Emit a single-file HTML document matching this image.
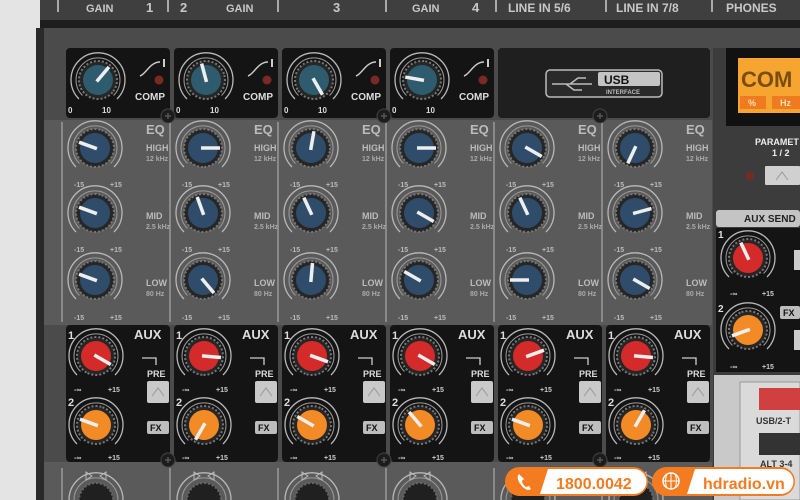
<!DOCTYPE html>
<html><head><meta charset="utf-8"><style>
html,body{margin:0;padding:0;width:800px;height:500px;overflow:hidden;background:#4a4a4a}
svg{display:block}
text{font-family:"Liberation Sans",sans-serif;font-weight:bold}
</style></head><body>
<svg width="800" height="500" viewBox="0 0 800 500" xmlns="http://www.w3.org/2000/svg">
<defs>
<symbol id="ring" overflow="visible"><path d="M-19,19 A27,27 0 1 1 19,19" fill="none" stroke="#b8b8b8" stroke-width="1.3"/><path d="M-15.5,15.5 A22,22 0 1 1 15.5,15.5" fill="none" stroke="#999" stroke-width="1"/></symbol>
<symbol id="kb" overflow="visible"><circle r="19" fill="#262626" stroke="#777" stroke-width="2" stroke-dasharray="2 2"/><circle r="15" fill="#2f4d6a"/><path d="M0,2 L0,-17" stroke="#eee" stroke-width="3.5"/></symbol>
<symbol id="kr" overflow="visible"><circle r="19" fill="#262626" stroke="#777" stroke-width="2" stroke-dasharray="2 2"/><circle r="15" fill="#d42a2a"/><path d="M0,2 L0,-17" stroke="#eee" stroke-width="3.5"/></symbol>
<symbol id="ko" overflow="visible"><circle r="19" fill="#262626" stroke="#777" stroke-width="2" stroke-dasharray="2 2"/><circle r="15" fill="#f28a25"/><path d="M0,2 L0,-17" stroke="#eee" stroke-width="3.5"/></symbol>
<symbol id="kt" overflow="visible"><circle r="19" fill="#262626" stroke="#777" stroke-width="2" stroke-dasharray="2 2"/><circle r="15" fill="#2e5c6e"/><path d="M0,2 L0,-17" stroke="#eee" stroke-width="3.5"/></symbol>
<symbol id="screw" overflow="visible"><circle r="7" fill="#1c1c1c" stroke="#444"/><path d="M-3,0H3M0,-3V3" stroke="#555" stroke-width="1.5"/></symbol>
<symbol id="col" overflow="visible">
<rect x="0" y="48" width="104" height="70" rx="4" fill="#141414"/>
<use href="#ring" x="32" y="80"/>
<path d="M74,76 C80,74 84,62 94,62" fill="none" stroke="#ccc" stroke-width="1.5"/>
<rect x="97" y="59" width="2" height="8" fill="#ccc"/>
<circle cx="93" cy="80" r="4.5" fill="#7a2a22"/>
<path d="M-4,122 V322" stroke="#8a8a8a" stroke-width="2"/>
<rect x="0" y="325" width="104" height="137" rx="4" fill="#141414"/>
<path d="M76,358 H90 V365" fill="none" stroke="#ccc" stroke-width="1.3"/>
<rect x="81" y="381" width="22" height="22" rx="2" fill="#c9c9c9"/>
<path d="M86,396 L92,388 L98,396" fill="none" stroke="#999"/>
<rect x="81" y="421" width="22" height="13" rx="2" fill="#bdbdbd"/>
<use href="#ring" x="29" y="148"/><use href="#ring" x="29" y="213"/><use href="#ring" x="29" y="280"/>
<use href="#ring" x="30" y="356"/><use href="#ring" x="30" y="425"/>
<path d="M-4,468 V500" stroke="#8a8a8a" stroke-width="2"/>
<use href="#ring" x="30" y="500"/>
<circle cx="30" cy="500" r="17" fill="#202020" stroke="#666" stroke-width="2" stroke-dasharray="2 2"/>
<path d="M20,472 L26,476 L20,480Z M40,472 L34,476 L40,480Z" fill="none" stroke="#bbb"/>
</symbol>
</defs>
<rect width="800" height="500" fill="#4b4b4b"/>
<rect x="0" y="0" width="800" height="22" fill="#3f3f3f"/>
<rect x="0" y="20" width="800" height="8" fill="#1e1e1e"/>
<rect x="0" y="0" width="40" height="500" fill="#e4e4e4"/>
<rect x="36" y="28" width="8" height="472" fill="#2a2a2a"/>
<rect x="44" y="120" width="668" height="205" fill="#5a5a5a"/>
<rect x="44" y="462" width="668" height="38" fill="#5a5a5a"/>
<g stroke="#aaa" stroke-width="2"><path d="M58,0V12M168,0V12M278,0V12M386,0V12M496,0V12M606,0V12M712,0V12"/></g>
<g fill="#c8c8c8" font-size="11">
<text x="86" y="12">GAIN</text><text x="146" y="12" font-size="13">1</text>
<text x="180" y="12" font-size="13">2</text><text x="226" y="12">GAIN</text><text x="333" y="12" font-size="13">3</text>
<text x="412" y="12">GAIN</text><text x="472" y="12" font-size="13">4</text>
<text x="508" y="12" font-size="12">LINE IN 5/6</text><text x="616" y="12" font-size="12">LINE IN 7/8</text><text x="726" y="12" font-size="12">PHONES</text>
</g>
<use href="#col" x="66"/><use href="#col" x="174"/><use href="#col" x="282"/><use href="#col" x="390"/>
<use href="#col" x="498"/><use href="#col" x="606"/>
<rect x="498" y="48" width="212" height="70" rx="4" fill="#1f1f1f"/>
<rect x="546" y="70" width="116" height="27" rx="4" fill="#2a2a2a" stroke="#bbb" stroke-width="1.5"/>
<rect x="598" y="72" width="62" height="14" rx="2" fill="#c4c4c4"/>
<path d="M552,84 H592 M570,84 L578,78 H586 M566,84 L574,90 H582" stroke="#bbb" stroke-width="1.5" fill="none"/>
<text x="604" y="84" font-size="12" fill="#111">USB</text>
<text x="606" y="94" font-size="6" fill="#bbb">INTERFACE</text>
<use href="#kt" transform="translate(98,80) rotate(40)"/><use href="#kt" transform="translate(206,80) rotate(-15)"/><use href="#kt" transform="translate(314,80) rotate(150)"/><use href="#kt" transform="translate(422,80) rotate(-80)"/>
<g>
<use href="#kb" transform="translate(95,148) rotate(-70)"/><use href="#kb" transform="translate(203,148) rotate(90)"/><use href="#kb" transform="translate(311,148) rotate(10)"/><use href="#kb" transform="translate(419,148) rotate(90)"/><use href="#kb" transform="translate(527,148) rotate(120)"/><use href="#kb" transform="translate(635,148) rotate(-155)"/>
<use href="#kb" transform="translate(95,213) rotate(-70)"/><use href="#kb" transform="translate(203,213) rotate(-20)"/><use href="#kb" transform="translate(311,213) rotate(-25)"/><use href="#kb" transform="translate(419,213) rotate(120)"/><use href="#kb" transform="translate(527,213) rotate(-25)"/><use href="#kb" transform="translate(635,213) rotate(75)"/>
<use href="#kb" transform="translate(95,280) rotate(-70)"/><use href="#kb" transform="translate(203,280) rotate(140)"/><use href="#kb" transform="translate(311,280) rotate(5)"/><use href="#kb" transform="translate(419,280) rotate(-60)"/><use href="#kb" transform="translate(527,280) rotate(-90)"/><use href="#kb" transform="translate(635,280) rotate(120)"/>
<use href="#kr" transform="translate(96,356) rotate(120)"/><use href="#kr" transform="translate(204,356) rotate(95)"/><use href="#kr" transform="translate(312,356) rotate(110)"/><use href="#kr" transform="translate(420,356) rotate(120)"/><use href="#kr" transform="translate(528,356) rotate(70)"/><use href="#kr" transform="translate(636,356) rotate(95)"/>
<use href="#ko" transform="translate(96,425) rotate(-70)"/><use href="#ko" transform="translate(204,425) rotate(-150)"/><use href="#ko" transform="translate(312,425) rotate(-60)"/><use href="#ko" transform="translate(420,425) rotate(-40)"/><use href="#ko" transform="translate(528,425) rotate(-70)"/><use href="#ko" transform="translate(636,425) rotate(30)"/>
</g>
<use href="#screw" x="168" y="116"/><use href="#screw" x="384" y="116"/><use href="#screw" x="600" y="116"/><use href="#screw" x="168" y="460"/><use href="#screw" x="384" y="460"/><use href="#screw" x="600" y="460"/>
<g font-size="10" fill="#ddd">
<text x="68" y="113" font-size="8">0</text><text x="102" y="113" font-size="8">10</text><text x="135" y="100">COMP</text>
<text x="176" y="113" font-size="8">0</text><text x="210" y="113" font-size="8">10</text><text x="243" y="100">COMP</text>
<text x="284" y="113" font-size="8">0</text><text x="318" y="113" font-size="8">10</text><text x="351" y="100">COMP</text>
<text x="392" y="113" font-size="8">0</text><text x="426" y="113" font-size="8">10</text><text x="459" y="100">COMP</text>
</g>
<g fill="#bbb" font-size="13">
<text x="146" y="134">EQ</text><text x="254" y="134">EQ</text><text x="362" y="134">EQ</text><text x="470" y="134">EQ</text><text x="578" y="134">EQ</text><text x="686" y="134">EQ</text>
</g>
<g fill="#bbb" font-size="9">
<text x="146" y="151">HIGH</text><text x="254" y="151">HIGH</text><text x="362" y="151">HIGH</text><text x="470" y="151">HIGH</text><text x="578" y="151">HIGH</text><text x="686" y="151">HIGH</text>
<text x="146" y="219">MID</text><text x="254" y="219">MID</text><text x="362" y="219">MID</text><text x="470" y="219">MID</text><text x="578" y="219">MID</text><text x="686" y="219">MID</text>
<text x="146" y="286">LOW</text><text x="254" y="286">LOW</text><text x="362" y="286">LOW</text><text x="470" y="286">LOW</text><text x="578" y="286">LOW</text><text x="686" y="286">LOW</text>
</g>
<g fill="#aaa" font-size="7">
<text x="146" y="161">12 kHz</text><text x="254" y="161">12 kHz</text><text x="362" y="161">12 kHz</text><text x="470" y="161">12 kHz</text><text x="578" y="161">12 kHz</text><text x="686" y="161">12 kHz</text>
<text x="146" y="229">2.5 kHz</text><text x="254" y="229">2.5 kHz</text><text x="362" y="229">2.5 kHz</text><text x="470" y="229">2.5 kHz</text><text x="578" y="229">2.5 kHz</text><text x="686" y="229">2.5 kHz</text>
<text x="146" y="296">80 Hz</text><text x="254" y="296">80 Hz</text><text x="362" y="296">80 Hz</text><text x="470" y="296">80 Hz</text><text x="578" y="296">80 Hz</text><text x="686" y="296">80 Hz</text>
</g>
<g fill="#bbb" font-size="7">
<text x="74" y="187">-15</text><text x="110" y="187">+15</text><text x="182" y="187">-15</text><text x="218" y="187">+15</text><text x="290" y="187">-15</text><text x="326" y="187">+15</text><text x="398" y="187">-15</text><text x="434" y="187">+15</text><text x="506" y="187">-15</text><text x="542" y="187">+15</text><text x="614" y="187">-15</text><text x="650" y="187">+15</text>
<text x="74" y="252">-15</text><text x="110" y="252">+15</text><text x="182" y="252">-15</text><text x="218" y="252">+15</text><text x="290" y="252">-15</text><text x="326" y="252">+15</text><text x="398" y="252">-15</text><text x="434" y="252">+15</text><text x="506" y="252">-15</text><text x="542" y="252">+15</text><text x="614" y="252">-15</text><text x="650" y="252">+15</text>
<text x="74" y="320">-15</text><text x="110" y="320">+15</text><text x="182" y="320">-15</text><text x="218" y="320">+15</text><text x="290" y="320">-15</text><text x="326" y="320">+15</text><text x="398" y="320">-15</text><text x="434" y="320">+15</text><text x="506" y="320">-15</text><text x="542" y="320">+15</text><text x="614" y="320">-15</text><text x="650" y="320">+15</text>
</g>
<g fill="#ddd" font-size="13">
<text x="134" y="339">AUX</text><text x="242" y="339">AUX</text><text x="350" y="339">AUX</text><text x="458" y="339">AUX</text><text x="566" y="339">AUX</text><text x="674" y="339">AUX</text>
<text x="68" y="339" font-size="11">1</text><text x="176" y="339" font-size="11">1</text><text x="284" y="339" font-size="11">1</text><text x="392" y="339" font-size="11">1</text><text x="500" y="339" font-size="11">1</text><text x="608" y="339" font-size="11">1</text>
<text x="68" y="406" font-size="11">2</text><text x="176" y="406" font-size="11">2</text><text x="284" y="406" font-size="11">2</text><text x="392" y="406" font-size="11">2</text><text x="500" y="406" font-size="11">2</text><text x="608" y="406" font-size="11">2</text>
</g>
<g fill="#ddd" font-size="9">
<text x="147" y="377">PRE</text><text x="255" y="377">PRE</text><text x="363" y="377">PRE</text><text x="471" y="377">PRE</text><text x="579" y="377">PRE</text><text x="687" y="377">PRE</text>
</g>
<g fill="#111" font-size="9">
<text x="150" y="431">FX</text><text x="258" y="431">FX</text><text x="366" y="431">FX</text><text x="474" y="431">FX</text><text x="582" y="431">FX</text><text x="690" y="431">FX</text>
</g>
<g fill="#ccc" font-size="7">
<text x="74" y="392">-∞</text><text x="108" y="392">+15</text><text x="182" y="392">-∞</text><text x="216" y="392">+15</text><text x="290" y="392">-∞</text><text x="324" y="392">+15</text><text x="398" y="392">-∞</text><text x="432" y="392">+15</text><text x="506" y="392">-∞</text><text x="540" y="392">+15</text><text x="614" y="392">-∞</text><text x="648" y="392">+15</text>
<text x="74" y="460">-∞</text><text x="108" y="460">+15</text><text x="182" y="460">-∞</text><text x="216" y="460">+15</text><text x="290" y="460">-∞</text><text x="324" y="460">+15</text><text x="398" y="460">-∞</text><text x="432" y="460">+15</text><text x="506" y="460">-∞</text><text x="540" y="460">+15</text><text x="614" y="460">-∞</text><text x="648" y="460">+15</text>
</g>
<rect x="713" y="48" width="87" height="452" fill="#3c3c3c"/>
<rect x="726" y="48" width="74" height="78" fill="#111"/>
<rect x="738" y="58" width="62" height="55" fill="#f5a530"/>
<text x="741" y="87" font-size="22" fill="#7a4e10" font-family="Liberation Mono" font-weight="normal">COM</text>
<rect x="740" y="96" width="26" height="13" fill="#f07a20"/><rect x="772" y="96" width="28" height="13" fill="#f07a20"/>
<text x="748" y="106" font-size="9" fill="#fde0b0">%</text><text x="780" y="106" font-size="9" fill="#fde0b0">Hz</text>
<text x="755" y="145" font-size="9" fill="#eee">PARAMET</text>
<text x="772" y="156" font-size="9" fill="#eee">1 / 2</text>
<circle cx="750" cy="176" r="4" fill="#7a2a22"/>
<rect x="765" y="166" width="35" height="19" rx="1" fill="#d0d0d0"/>
<path d="M776,180 L782,172 L788,180" fill="none" stroke="#999"/>
<rect x="716" y="210" width="84" height="17" rx="3" fill="#c4c4c4"/>
<text x="744" y="222" font-size="10" fill="#222">AUX SEND</text>
<rect x="716" y="228" width="84" height="144" fill="#141414"/>
<use href="#ring" x="748" y="258"/><use href="#kr" transform="translate(748,258) rotate(-25)"/>
<use href="#ring" x="748" y="330"/><use href="#ko" transform="translate(748,330) rotate(-110)"/>
<text x="718" y="238" font-size="10" fill="#ddd">1</text><text x="718" y="312" font-size="10" fill="#ddd">2</text>
<text x="730" y="296" font-size="7" fill="#ccc">-∞</text><text x="762" y="296" font-size="7" fill="#ccc">+15</text>
<text x="730" y="369" font-size="7" fill="#ccc">-∞</text><text x="762" y="369" font-size="7" fill="#ccc">+15</text>
<rect x="780" y="306" width="20" height="13" rx="2" fill="#bdbdbd"/><text x="783" y="316" font-size="9" fill="#111">FX</text>
<rect x="794" y="250" width="6" height="20" fill="#ccc"/><rect x="794" y="330" width="6" height="20" fill="#ccc"/>
<rect x="714" y="375" width="86" height="125" fill="#c9c9c9"/>
<rect x="740" y="382" width="60" height="118" fill="#dadada" stroke="#999"/>
<rect x="759" y="388" width="41" height="22" fill="#d04040"/>
<text x="756" y="424" font-size="9" fill="#333">USB/2-T</text>
<rect x="759" y="433" width="41" height="22" fill="#333"/>
<text x="760" y="467" font-size="9" fill="#333">ALT 3-4</text>
<rect x="505" y="467" width="143" height="29" rx="14.5" fill="#f47b20"/>
<path d="M548,469 H634 A12.5,12.5 0 0 1 634,494 H540 Z" fill="#fff"/>
<path d="M519,474 c-2,2 -2,6 2,11 c4,5 8,6 10,4 l-2,-3 l-3,1 c-2,-1 -4,-4 -4,-6 l2,-2 z" fill="#fff"/>
<text x="556" y="489" font-size="16" fill="#f47b20" font-weight="bold">1800.0042</text>
<rect x="652" y="467" width="143" height="29" rx="14.5" fill="#f47b20"/>
<path d="M695,469 H781 A12.5,12.5 0 0 1 781,494 H687 Z" fill="#fff"/>
<circle cx="671" cy="481" r="8" fill="none" stroke="#fff" stroke-width="1.5"/>
<path d="M663,481H679M671,473V489M667,474Q664,481 667,488M675,474Q678,481 675,488" stroke="#fff" fill="none"/>
<text x="703" y="489" font-size="16" fill="#f47b20" font-weight="bold">hdradio.vn</text>
</svg>
</body></html>
